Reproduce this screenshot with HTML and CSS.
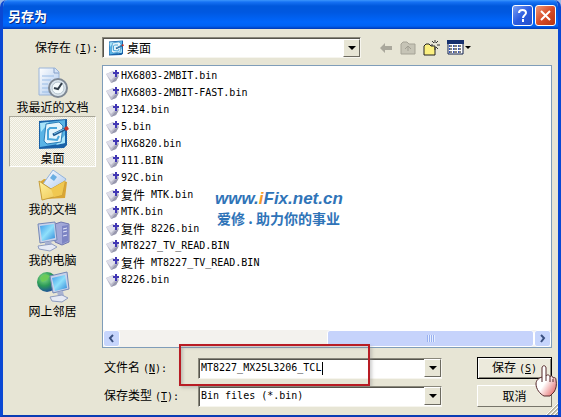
FILE: index.html
```
<!DOCTYPE html>
<html lang="zh-CN">
<head>
    <meta charset="utf-8">
    <title>另存为</title>
    <link rel="stylesheet" href="styles.css">
</head>
<body>
    <svg width="0" height="0" class="defs">
        <defs>
            <linearGradient id="screen" x1="0" y1="0" x2="1" y2="1">
                <stop offset="0" stop-color="#3f9be8"/>
                <stop offset="0.5" stop-color="#8fe0fb"/>
                <stop offset="1" stop-color="#2f86d8"/>
            </linearGradient>
            <linearGradient id="paper" x1="0" y1="0" x2="1" y2="1">
                <stop offset="0" stop-color="#ffffff"/>
                <stop offset="1" stop-color="#a9c6ec"/>
            </linearGradient>
            <linearGradient id="folder" x1="0" y1="0" x2="1" y2="1">
                <stop offset="0" stop-color="#fff3a0"/>
                <stop offset="1" stop-color="#ecc048"/>
            </linearGradient>
            <radialGradient id="globe" cx="0.35" cy="0.3" r="0.8">
                <stop offset="0" stop-color="#8ee08a"/>
                <stop offset="0.5" stop-color="#2c9a58"/>
                <stop offset="1" stop-color="#1a3fa8"/>
            </radialGradient>
            <linearGradient id="skin" x1="0" y1="0" x2="1" y2="1">
                <stop offset="0.5" stop-color="#ffffff"/>
                <stop offset="1" stop-color="#e05050"/>
            </linearGradient>
            <symbol id="desktop" viewBox="0 0 32 32">
                <path d="M2 3l28-2v26l-3 3-25 1z" fill="#1a62a8"/>
                <path d="M3 5l25-3v23l-25 4z" fill="#59b4e6"/>
                <path d="M3 5l9-1-8 10zM28 17v8l-9 2z" fill="#a8e4fa"/>
                <path d="M9 6l13-2 4 4-2 16-14 2-3-3z" fill="#e4f5fc" stroke="#2d7fb8"/>
                <path d="M20 10h-7l-2 2v9l9 1 2-4" fill="none" stroke="#4aa6da" stroke-width="2"/>
                <path d="M16 17l12-6" stroke="#18558c" stroke-width="3"/>
                <path d="M17 16l10-5" stroke="#7fc4ec"/>
                <path d="M27 10l3-2 2 3-3 2z" fill="#c83228"/>
            </symbol>
            <symbol id="file" viewBox="0 0 14 14">
                <path d="M0 5l7-3 6 4-3 6-5 2z" fill="#bcbccb"/>
                <path d="M0 5l6-2 4 3-5 5z" fill="#dfdfea"/>
                <path d="M5 14l5-2 3-5-4 2z" fill="#9898ae"/>
                <path d="M9 1h2v2h2v2h-2v3H9V5H7V3h2z" fill="#4238b4"/>
            </symbol>
        </defs>
    </svg>
    <div class="dialog">
        <div class="titlebar">
            <h1>另存为</h1>
            <button class="cap help" aria-label="帮助">
                <svg width="19" height="19" viewBox="0 0 19 19"><path d="M6 7c0-4 7-4 7 0 0 2-3 2-3 5M10 13v3" fill="none" stroke="#fff" stroke-width="2"/></svg>
            </button>
            <button class="cap close" aria-label="关闭">
                <svg width="19" height="19" viewBox="0 0 19 19"><path d="M5 5l9 9M14 5l-9 9" stroke="#fff" stroke-width="2"/></svg>
            </button>
        </div>

        <div class="lookin">
            <label for="place">保存在<span class="en key">(<u>I</u>):</span></label>
            <div class="combo">
                <svg class="combo-icon" width="16" height="16"><use href="#desktop"/></svg>
                <select id="place"><option>桌面</option></select>
                <span class="arrow"></span>
            </div>
            <div class="tools">
                <button aria-label="后退">
                    <svg width="14" height="14" viewBox="0 0 14 14"><path d="M1 7l5-5v3h7v4H6v3z" fill="#aaa89c"/></svg>
                </button>
                <button aria-label="向上一级">
                    <svg width="16" height="14" viewBox="0 0 16 14"><path d="M1 13V3l2-2h4l2 2h6v10z" fill="#c6c4b6" stroke="#a5a396"/><path d="M8 10V5M5 8l3-3 3 3" fill="none" stroke="#a09e92"/></svg>
                </button>
                <button aria-label="新建文件夹">
                    <svg width="17" height="16" viewBox="0 0 17 16"><path d="M1 15V6l2-2h3l2 2h4v9z" fill="#fbf080" stroke="#222"/><path d="M12 0v3M12 7v3M8 5h2M14 5h3M9 1l2 2M15 1l-2 2M15 9l-2-2" stroke="#333"/></svg>
                </button>
                <button aria-label="查看">
                    <svg width="24" height="15" viewBox="0 0 24 15"><path d="M1 1h15v13H1z" fill="#fff" stroke="#10204c"/><path d="M0 0h17v4H0z" fill="#16306e"/><path d="M3 6h2M7 6h3M12 6h2M3 9h2M7 9h3M12 9h2M3 12h2M7 12h3M12 12h2" stroke="#000"/><path d="M2 5h1v2H2zM6 5h1v2H6zM11 5h1v2h-1zM2 8h1v2H2zM6 8h1v2H6zM11 8h1v2h-1zM2 11h1v2H2zM6 11h1v2H6zM11 11h1v2h-1z" fill="#3858b8"/><path d="M18 6h6l-3 3z"/></svg>
                </button>
            </div>
        </div>

        <div class="main">
            <div class="places">
                <button class="place">
                    <svg width="32" height="32" viewBox="0 0 32 32"><path d="M2 1h16l4 4v23H2z" fill="url(#paper)" stroke="#9ab4d8"/><path d="M17 1v5h5" fill="#d3e2f6" stroke="#86a0c8"/><path d="M5 9h12M5 13h9M5 17h6M5 21h6M5 25h8" stroke="#9abce6"/><circle cx="21" cy="21" r="9" fill="#dce6ee" stroke="#7e8894" stroke-width="2"/><circle cx="21" cy="21" r="6" fill="#f4fafc" stroke="#b6c4ce"/><path d="M25 16l-4 6-4-1" fill="none" stroke="#34404c" stroke-width="2"/></svg>
                    我最近的文档
                </button>
                <button class="place selected">
                    <svg width="32" height="32"><use href="#desktop"/></svg>
                    桌面
                </button>
                <button class="place">
                    <svg width="32" height="32" viewBox="0 0 32 32"><path d="M3 13l4-3 23 3-2 16-21 1z" fill="#d9a534"/><path d="M16 1l13 9-9 14-14-9z" fill="url(#paper)" stroke="#92b4dc"/><path d="M16 5l4 3-3 4-4-3z" fill="#69aee2"/><path d="M2 12l12 8 14-8-3 14-20 5z" fill="url(#folder)" stroke="#c69c38"/><path d="M14 20l14-8-3 14-8 2z" fill="#f0c850"/></svg>
                    我的文档
                </button>
                <button class="place">
                    <svg width="34" height="32" viewBox="0 0 34 32"><path d="M19 4l6-2 8 2v18l-7 3-7-3z" fill="#a2a8d8" stroke="#7077b0"/><path d="M26 6l6-1v16l-6 3z" fill="#7d85c4"/><path d="M27 9l4-1M27 12l4-1M27 16l4-1" stroke="#e6e8fa"/><path d="M2 4l17-2 2 18-17 3z" fill="#c8d2ea" stroke="#7488b8"/><path d="M4 6l14-2 1 14-13 3z" fill="url(#screen)"/><path d="M9 22l6-1 1 4H9z" fill="#a8b2d2"/><path d="M2 26l14-2 5 3-7 4-11-2z" fill="#e6eaf5" stroke="#8e9cc0"/></svg>
                    我的电脑
                </button>
                <button class="place">
                    <svg width="34" height="32" viewBox="0 0 34 32"><circle cx="11" cy="11" r="10" fill="url(#globe)"/><path d="M4 7l5-4 5 2-3 4-5 2z" fill="#6ccb58"/><path d="M14 5l17-4 2 17-16 4z" fill="#c8d2ea" stroke="#7488b8"/><path d="M16 7l13-3 2 13-12 3z" fill="url(#screen)"/><path d="M21 21l6-1 1 5h-6z" fill="#a8b2d2"/><path d="M14 26l12-2 6 3-6 4-10-1z" fill="#e6eaf5" stroke="#8e9cc0"/></svg>
                    网上邻居
                </button>
            </div>

            <div class="files">
                <ul>
                    <li><svg width="14" height="14"><use href="#file"/></svg><span class="en">HX6803-2MBIT.bin</span></li>
                    <li><svg width="14" height="14"><use href="#file"/></svg><span class="en">HX6803-2MBIT-FAST.bin</span></li>
                    <li><svg width="14" height="14"><use href="#file"/></svg><span class="en">1234.bin</span></li>
                    <li><svg width="14" height="14"><use href="#file"/></svg><span class="en">5.bin</span></li>
                    <li><svg width="14" height="14"><use href="#file"/></svg><span class="en">HX6820.bin</span></li>
                    <li><svg width="14" height="14"><use href="#file"/></svg><span class="en">111.BIN</span></li>
                    <li><svg width="14" height="14"><use href="#file"/></svg><span class="en">92C.bin</span></li>
                    <li><svg width="14" height="14"><use href="#file"/></svg>复件<span class="en"> MTK.bin</span></li>
                    <li><svg width="14" height="14"><use href="#file"/></svg><span class="en">MTK.bin</span></li>
                    <li><svg width="14" height="14"><use href="#file"/></svg>复件<span class="en"> 8226.bin</span></li>
                    <li><svg width="14" height="14"><use href="#file"/></svg><span class="en">MT8227_TV_READ.BIN</span></li>
                    <li><svg width="14" height="14"><use href="#file"/></svg>复件<span class="en"> MT8227_TV_READ.BIN</span></li>
                    <li><svg width="14" height="14"><use href="#file"/></svg><span class="en">8226.bin</span></li>
                </ul>
                <div class="scrollbar">
                    <button aria-label="向左滚动"><svg width="9" height="9" viewBox="0 0 9 9"><path d="M6 1L3 4l3 4" fill="none" stroke="#3a5080" stroke-width="2"/></svg></button>
                    <div class="track"><div class="thumb"></div></div>
                    <button aria-label="向右滚动"><svg width="9" height="9" viewBox="0 0 9 9"><path d="M3 1l3 3-3 4" fill="none" stroke="#3a5080" stroke-width="2"/></svg></button>
                </div>
                <div class="watermark">
                    <div class="site">www.<span>i</span>Fix.net.cn</div>
                    <div class="slogan">爱修 . 助力你的事业</div>
                </div>
            </div>
        </div>

        <div class="fields">
            <label for="filename">文件名<span class="en key">(<u>N</u>):</span></label>
            <div class="combo">
                <input id="filename" type="text" value="MT8227_MX25L3206_TCL">
                <span class="arrow"></span>
                <div class="caret"></div>
                <div class="marker"></div>
            </div>
            <button class="btn save">保存<span class="en key">(<u>S</u>)</span>
                <svg class="hand" width="22" height="32" viewBox="0 0 22 32"><path d="M7 12V3c0-3 4-3 4 0v8c1-2 4-1 4 1 1-2 3-1 3 1 2-1 3 0 3 2 1 5 0 9-2 12l-4 4H9c-4-2-8-7-8-12 0-4 3-6 6-7z" fill="url(#skin)" stroke="#55282a"/><path d="M11 11v5M15 12v5M18 14v3M7 12v5" stroke="#55282a"/></svg>
            </button>
            <label for="filetype">保存类型<span class="en key">(<u>T</u>):</span></label>
            <div class="combo">
                <select id="filetype" class="en"><option>Bin files (*.bin)</option></select>
                <span class="arrow"></span>
            </div>
            <button class="btn">取消</button>
        </div>
        <svg class="grip" width="12" height="12" viewBox="0 0 12 12"><path d="M1 12L12 1M5 12l7-7M9 12l3-3" stroke="#b4b09c" stroke-width="2"/><path d="M0 12L12 0M4 12l8-8M8 12l4-4" stroke="#fff"/></svg>
    </div>
</body>
</html>
```
FILE: styles.css
```
* {
    box-sizing: border-box;
}
body {
    margin: 0;
    background: #9db9e8;
    font-family: "Noto Sans CJK SC", sans-serif;
    font-size: 12px;
    line-height: 16px;
    color: #000;
}
button, input, select {
    font: inherit;
    color: inherit;
    margin: 0;
    padding: 0;
    border: 0;
    background: none;
}
.defs {
    position: absolute;
}
.en {
    font-family: "DejaVu Sans Mono", monospace;
    font-size: 10px;
    white-space: pre;
}
.key {
    margin-left: 3px;
}
.dialog {
    position: relative;
    display: flex;
    flex-direction: column;
    min-height: 100vh;
    background: #e7e5d5;
    border: 3px solid #0a48d4;
    border-top: 0;
    border-bottom: 2px solid #0a3cb4;
    border-radius: 7px 7px 0 0;
    overflow: hidden;
}
.titlebar {
    display: flex;
    align-items: center;
    gap: 2px;
    height: 29px;
    margin: 0 -3px;
    padding: 2px 5px 0 8px;
    background: linear-gradient(#3c96fc 0, #1672f4 2px, #0058dc 6px, #0058e0 12px, #0066fc 22px, #0062f4 26px, #0038b4 29px);
}
.titlebar h1 {
    flex: 1;
    margin: 0;
    font-size: 13px;
    color: #fff;
    text-shadow: 1px 1px #0a2a80;
}
.cap {
    width: 21px;
    height: 21px;
    border: 1px solid #fff;
    border-radius: 3px;
}
.cap svg {
    display: block;
}
.help {
    background: linear-gradient(135deg, #7ba0f4, #2c5ce0 50%, #2450cc);
}
.close {
    background: linear-gradient(135deg, #ee9878, #d84c28 50%, #b83410);
}
.lookin {
    display: flex;
    align-items: center;
    padding: 8px 6px 7px 0;
}
.lookin label {
    width: 99px;
    padding-left: 32px;
}
.combo {
    position: relative;
    display: flex;
    align-items: center;
    flex: 1;
    height: 21px;
    background: #fff;
    border: 1px solid;
    border-color: #8a887c #f6f5ee #f6f5ee #8a887c;
    box-shadow: inset 1px 1px #55544c;
}
.combo-icon {
    margin-left: 5px;
}
.combo select, .combo input {
    flex: 1;
    min-width: 0;
    height: 18px;
    padding-left: 3px;
    appearance: none;
    outline: none;
}
.combo input, .combo select.en {
    padding-left: 2px;
    font-family: "DejaVu Sans Mono", monospace;
    font-size: 10px;
    line-height: 18px;
}
.arrow {
    display: flex;
    align-items: center;
    justify-content: center;
    width: 17px;
    height: 18px;
    background: #e7e5d5;
    border: 1px solid;
    border-color: #fff #6c6a60 #6c6a60 #fff;
}
.arrow::after {
    content: "";
    border: 4px solid transparent;
    border-top-color: #000;
    border-bottom: 0;
}
.tools {
    display: flex;
    align-items: center;
    gap: 7px;
    width: 191px;
    padding-left: 18px;
}
.tools svg {
    display: block;
}
.main {
    display: flex;
    flex: 1;
    gap: 6px;
    padding: 0 6px;
}
.places {
    width: 87px;
}
.place {
    display: flex;
    flex-direction: column;
    align-items: center;
    width: 100%;
    height: 51px;
    padding-top: 1px;
    border: 1px solid transparent;
    white-space: nowrap;
}
.place svg {
    flex: none;
}
.selected {
    border-color: #a8a698 #fff #fff #a8a698;
    background: repeating-conic-gradient(#f8f7f0 0 25%, #e7e5d5 0 50%) 0 0 / 2px 2px;
}
.files {
    position: relative;
    display: flex;
    flex-direction: column;
    flex: 1;
    background: #fff;
    border: 1px solid #7f9db9;
}
.files ul {
    flex: 1;
    margin: 0;
    padding: 1px 0 0 3px;
    list-style: none;
}
.files li {
    display: flex;
    align-items: center;
    height: 17px;
}
.files li svg {
    margin-right: 1px;
}
.scrollbar {
    display: flex;
    height: 17px;
    background: #f3f2ee;
}
.scrollbar button {
    display: flex;
    align-items: center;
    justify-content: center;
    width: 17px;
    background: #c6d5fc;
    border: 1px solid #fff;
    border-radius: 3px;
}
.track {
    display: flex;
    justify-content: flex-end;
    flex: 1;
}
.thumb {
    width: 50%;
    border: 1px solid #fff;
    border-radius: 3px;
    background: repeating-linear-gradient(90deg, #98b0f0 0 1px, #e6eeff 1px 2px) center / 8px 7px no-repeat #c6d3fb;
}
.watermark {
    position: absolute;
    left: 112px;
    top: 122px;
    color: #2f74b8;
    white-space: nowrap;
}
.site {
    font: italic bold 17px/22px "Liberation Sans", Arial, sans-serif;
}
.site span {
    color: #f59a28;
}
.slogan {
    font-size: 14px;
    font-weight: bold;
    padding-left: 2px;
}
.fields {
    display: grid;
    grid-template-columns: 94px 1fr 75px;
    row-gap: 6px;
    align-items: center;
    padding: 9px 6px 8px 101px;
}
.fields .combo {
    margin-right: 35px;
}
.caret {
    position: absolute;
    left: 123px;
    top: 3px;
    width: 1px;
    height: 13px;
    background: #000;
}
.marker {
    position: absolute;
    left: -20px;
    top: -15px;
    width: 191px;
    height: 42px;
    border: 2px solid #b81c24;
    box-shadow: 2px 2px 3px #8886, inset 2px 2px 3px #8886;
    pointer-events: none;
}
.btn {
    position: relative;
    height: 22px;
    background: #eceadc;
    border: 1px solid;
    border-color: #fff #77756a #77756a #fff;
}
.save {
    border-color: #000;
    box-shadow: inset 1px 1px #fff, inset -1px -1px #88867a;
}
.hand {
    position: absolute;
    left: 57px;
    top: 7px;
    z-index: 1;
}
.grip {
    position: absolute;
    right: 0;
    bottom: 0;
}
```
